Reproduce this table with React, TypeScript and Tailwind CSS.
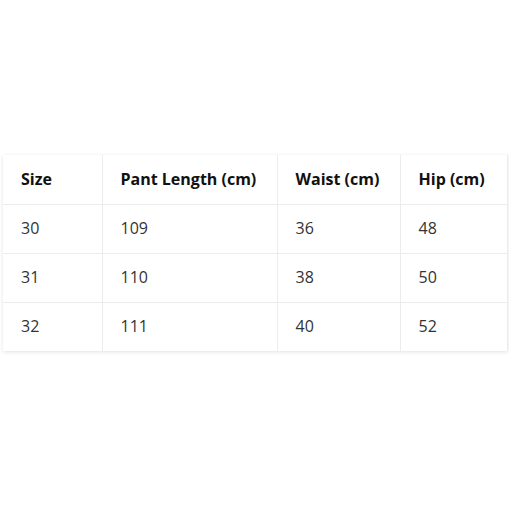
import React from "react";

const headers = ["Size", "Pant Length (cm)", "Waist (cm)", "Hip (cm)"];
const rows = [
  ["30", "109", "36", "48"],
  ["31", "110", "38", "50"],
  ["32", "111", "40", "52"],
];
const widths = ["w-[99px]", "w-[175px]", "w-[123px]", "w-[107px]"];

export default function App() {
  return (
    <div
      className="min-h-screen bg-white pt-[155px] pl-[3px] pr-[2px]"
      style={{ fontFamily: '"Open Sans", "Noto Sans", sans-serif' }}
    >
      <table className="w-[504px] border-collapse table-fixed shadow-[0_1px_4px_rgba(0,0,0,0.12)]">
        <colgroup>
          {widths.map((w, i) => (
            <col key={i} className={w} />
          ))}
        </colgroup>
        <thead>
          <tr className="h-[49px]">
            {headers.map((h) => (
              <th
                key={h}
                className="text-left align-middle font-bold text-[16px] leading-[22px] text-[#111] pl-[18px] pb-[1px] border-b border-r border-[#ececec]"
              >
                {h}
              </th>
            ))}
          </tr>
        </thead>
        <tbody>
          {rows.map((r, ri) => (
            <tr key={ri} className="h-[49px]">
              {r.map((c, ci) => (
                <td
                  key={ci}
                  className={`text-left align-middle text-[16px] leading-[22px] text-[#333] pl-[18px] pb-[1px] border-r border-[#ececec] ${
                    ri < 2 ? "border-b" : ""
                  }`}
                >
                  {c}
                </td>
              ))}
            </tr>
          ))}
        </tbody>
      </table>
    </div>
  );
}
